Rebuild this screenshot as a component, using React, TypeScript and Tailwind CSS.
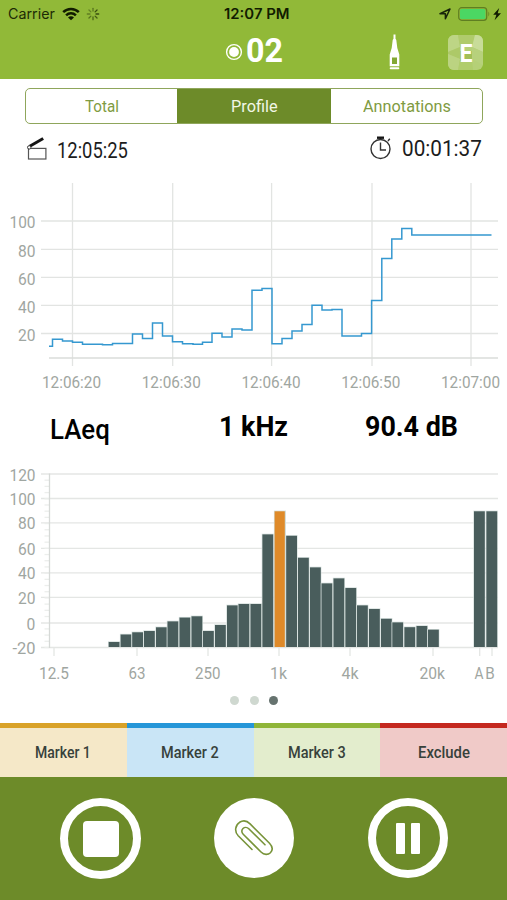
import { useLayoutEffect, useRef, useState } from 'react';

// Condenses a line of text so that it fills exactly the width of its box.
function Fit({ children, className }: { children: string; className: string }) {
  const box = useRef<HTMLSpanElement>(null);
  const inner = useRef<HTMLSpanElement>(null);
  const [scale, setScale] = useState(1);
  useLayoutEffect(() => {
    if (box.current && inner.current) setScale(box.current.offsetWidth / inner.current.offsetWidth);
  }, []);
  return (
    <span ref={box} className={`block shrink-0 whitespace-nowrap ${className}`}>
      <span ref={inner} className="inline-block origin-left" style={{ transform: `scaleX(${scale})` }}>
        {children}
      </span>
    </span>
  );
}

function StatusBar() {
  return (
    <div className="flex h-[28px] items-center font-['Inter',sans-serif] text-[14px] leading-[28px] text-[#1d2a05]">
      <Fit className="ml-[8px] w-[47px]">Carrier</Fit>
      <svg className="ml-[7px] shrink-0" width="18" height="14" viewBox="0 0 18 14" fill="none" stroke="#111c00" strokeWidth="2.5">
        <path d="M1.2 5.2a11 11 0 0 1 15.6 0" />
        <path d="M4.1 8.3a7 7 0 0 1 9.8 0" />
        <path d="M9 13.3 6 10.4a4.2 4.2 0 0 1 6 0z" fill="#111c00" stroke="none" />
      </svg>
      <svg className="ml-[6px] shrink-0" width="14" height="14" viewBox="-7 -7 14 14" strokeWidth="1.3" strokeLinecap="round">
        {[0, 45, 90, 135, 180, 225, 270, 315].map((a, i) => (
          <path key={a} d="M0-3V-5.7" stroke="#2f430b" strokeOpacity={[0.55, 0.9, 0.9, 0.8, 0.7, 0.6, 0.5, 0.45][i]} transform={`rotate(${a})`} />
        ))}
      </svg>
      <Fit className="ml-[124px] w-[66px] font-semibold text-[#111c00]">12:07 PM</Fit>
      <svg className="ml-[149px] shrink-0" width="12" height="12" viewBox="0 0 12 12" fill="none" stroke="#18240a" strokeWidth="1.5" strokeLinejoin="round">
        <path d="M11 1 6.4 10.7V5.8H1z" />
      </svg>
      <svg className="ml-[7px] shrink-0" width="44" height="14" viewBox="0 0 44 14">
        <rect x=".7" y=".7" width="28" height="12.6" rx="3" fill="none" stroke="#5f7e22" strokeWidth="1.2" />
        <rect x="2" y="2" width="25.4" height="10" rx="1.5" fill="#4bd763" />
        <path d="M30.3 4.5q2 2.5 0 5z" fill="#688726" />
        <path d="M41.2 1 35.2 7.7h3.2l-1.8 5.6 6.4-7h-3.3z" fill="#101b00" />
      </svg>
    </div>
  );
}

function Header() {
  return (
    <header className="h-[79px] bg-[#91b938]">
      <StatusBar />
      <div className="flex h-[48px] items-center text-white">
        <svg className="ml-[225px] shrink-0" width="18" height="18" viewBox="0 0 18 18">
          <circle cx="9" cy="9" r="7.4" fill="none" stroke="white" strokeWidth="1.4" />
          <circle cx="9" cy="9" r="4.9" fill="white" />
        </svg>
        <Fit className="mb-[5px] ml-[3px] w-[37px] text-[34px] leading-[44px] font-bold">02</Fit>
        <svg className="ml-[106px] shrink-0" width="11" height="36" viewBox="0 0 11 36">
          <path d="M4.5.5h2v4.2l.8 1.3 1 8 2 6.5v11.7H.7V20.5l2-6.5 1-8 .8-1.3z" fill="white" />
          <rect x="3" y="23.5" width="5" height="6.5" fill="#83a834" />
          <rect x=".7" y="33.3" width="9.6" height="2" rx="1" fill="white" />
        </svg>
        <svg className="ml-[48px] shrink-0" width="35" height="35" viewBox="0 0 35 35">
          <clipPath id="badge"><rect width="35" height="35" rx="6" /></clipPath>
          <g clipPath="url(#badge)">
            <rect width="35" height="35" fill="#b5d077" />
            <path d="M0 0h10l2 12L0 17z" fill="#bdd585" />
            <path d="m10 0 2 12h12l3-12z" fill="#b0cb6c" />
            <path d="M27 0h8v17l-11-5z" fill="#c8dc99" />
            <path d="m0 17 12-5v12L0 19z" fill="#adc968" />
            <path d="m35 17-11-5v12l11 6z" fill="#b7d17c" />
            <path d="m0 19 12 5-2 11H0z" fill="#bbd381" />
            <path d="m12 24-2 11h15l-1-11z" fill="#b0cd6c" />
            <path d="M12 16h12v10H12z" fill="#a2bf57" />
          </g>
          <text x="11.6" y="27.2" fontSize="26.5" fontWeight="700" textLength="13" lengthAdjust="spacingAndGlyphs" fill="white">E</text>
        </svg>
      </div>
    </header>
  );
}

const LEVEL_GRID: [string, number][] = [['100', 221], ['80', 249.3], ['60', 277.4], ['40', 305.4], ['20', 333.5]];
const TIME_GRID: [string, number][] = [['12:06:20', 72.5], ['12:06:30', 172.7], ['12:06:40', 271.6], ['12:06:50', 372], ['12:07:00', 471]];
const STEPS: [number, number][] = [
  [49, 346.3], [52.5, 339.3], [62.5, 341], [72.5, 342.3], [82.5, 344.2], [102.5, 344.8], [112.5, 343.5], [132.5, 334],
  [142.5, 338.5], [152.5, 323], [162.5, 336], [172.5, 341.7], [182.5, 343.7], [193, 344.2], [202.5, 342.3], [212, 333.3],
  [222, 337], [232, 329], [242, 330], [252, 290.3], [262, 288.5], [272, 343.8], [282, 338.4], [292, 331], [302, 324.6],
  [312, 305.2], [322, 310], [332, 309.5], [342, 336], [361.5, 333.5], [371.6, 300.6], [381.8, 258.5], [391.8, 239],
  [401.8, 228.6], [411.8, 235],
];

function ProfileChart() {
  const line = STEPS.map(([x, y], i) => (i === 0 ? `M${x} ${y}` : `H${x}V${y}`)).join('') + 'H491.5';
  return (
    <svg className="block" width="507" height="225" viewBox="0 175 507 225" fontSize="16.3" fill="#9fa6a1">
      <g stroke="#e2e4e2" strokeWidth="1.3">
        {LEVEL_GRID.map(([l, y]) => <path key={l} d={`M41 ${y}H498`} />)}
        {TIME_GRID.map(([l, x]) => <path key={l} d={`M${x} 183V366`} />)}
        <path d="M49 358H498" stroke="#dadcda" />
      </g>
      {LEVEL_GRID.map(([l, y]) => (
        <text key={l} x={l.length === 3 ? 9.5 : 18} y={y + 7.2} textLength={l.length === 3 ? 26 : 17.5} lengthAdjust="spacingAndGlyphs">{l}</text>
      ))}
      {TIME_GRID.map(([l], i) => (
        <text key={l} x={42 + i * 99.75} y="388.3" textLength="59" lengthAdjust="spacingAndGlyphs">{l}</text>
      ))}
      <path d={line} fill="none" stroke="#3598d0" strokeWidth="1.5" />
    </svg>
  );
}

const DB_GRID: [string, number, number, number][] = [
  ['120', 474, 9.5, 26], ['100', 498.5, 9.5, 26], ['80', 522.8, 18, 17.5], ['60', 548.3, 18, 17.5],
  ['40', 572.8, 18, 17.5], ['20', 597.4, 18, 17.5], ['0', 623, 26.5, 8.8], ['-20', 647.5, 12.5, 23],
];
const BANDS: [string, number, number, number][] = [
  ['12.5', 54, 39, 30], ['63', 137, 128.5, 17], ['250', 208, 195, 25.5], ['1k', 279, 270, 17],
  ['4k', 350, 341.5, 17], ['20k', 433, 419.5, 25.5], ['A', 479.7, 474.5, 9], ['B', 492, 485.3, 9.5],
];
const BARS: [number, number][] = [
  [108.7, 642], [120.6, 634.5], [132.2, 632.3], [144, 631], [156, 627.3], [167.5, 621.4], [179.5, 617.6], [191.5, 616.3],
  [203, 631], [215, 625], [227, 605.4], [238.5, 604], [250.5, 604], [262.4, 534.4], [274.6, 511.3], [286.2, 535.8],
  [298, 557.8], [310, 567.4], [321.5, 583.4], [333.5, 578.4], [345.4, 588], [357, 605.4], [369, 609], [381, 618.8],
  [392.3, 622.4], [404.4, 627.2], [416.5, 626], [428, 629.7], [474, 511.3], [486.4, 511.3],
];

function SpectrumChart() {
  return (
    <svg className="block" width="507" height="230" viewBox="0 460 507 230" fontSize="16.3" fill="#9fa6a1">
      <g stroke="#e4e6e4" strokeWidth="1.3">
        {DB_GRID.map(([l, y]) => <path key={l} d={`M41 ${y}H498`} />)}
        {Array.from({ length: 29 }, (_, i) => <path key={i} d={`M44.5 ${474 + i * 6.196}H49`} stroke="#eceeec" />)}
        {BANDS.map(([l, x]) => <path key={l} d={`M${x} 648V656`} />)}
        <path d="M49.5 473.5V648" stroke="#d6d9d7" />
      </g>
      {DB_GRID.map(([l, y, x, w]) => (
        <text key={l} x={x} y={y + 6.6} textLength={w} lengthAdjust="spacingAndGlyphs">{l}</text>
      ))}
      {BANDS.map(([l, , x, w]) => (
        <text key={l} x={x} y="679" textLength={w} lengthAdjust="spacingAndGlyphs">{l}</text>
      ))}
      {BARS.map(([x, y]) => (
        <g key={x}>
          <rect x={x - 0.7} y={y - 0.7} width="12.1" height={647.7 - y} fill="#d4dfdc" />
          <rect x={x} y={y} width={x === 274.6 ? 10.2 : 10.8} height={647 - y} fill={x === 274.6 ? '#df8a29' : '#495d5c'} />
        </g>
      ))}
    </svg>
  );
}

function Marker({ label, tone, text }: { label: string; tone: string; text: string }) {
  return (
    <div className={`flex flex-1 justify-center border-t-[5px] text-[16px] leading-[49px] font-medium text-[#37413b] ${tone}`}>
      <Fit className={text}>{label}</Fit>
    </div>
  );
}

export default function App() {
  return (
    <div className="flex h-[900px] w-[507px] flex-col overflow-hidden bg-white font-['Roboto',sans-serif]">
      <Header />
      <div className="mt-[9px] ml-[25px] flex h-[36px] w-[458px] shrink-0 overflow-hidden rounded-[5px] border-[1.5px] border-[#8fa65b] text-[17px] leading-[34px] text-[#7f9b42]">
        <div className="flex w-[151px] justify-center"><Fit className="w-[34px]">Total</Fit></div>
        <div className="flex w-[154px] justify-center bg-[#6d8b29] text-[#f2f7e6]"><Fit className="w-[47px]">Profile</Fit></div>
        <div className="flex flex-1 justify-center"><Fit className="w-[88px]">Annotations</Fit></div>
      </div>
      <div className="flex h-[51px] shrink-0 text-[22px] leading-[30px] text-[#1c1c1c]">
        <svg className="mt-[12px] ml-[26px] shrink-0" width="22" height="25" viewBox="0 0 22 25" fill="none">
          <rect x="2.5" y="12.4" width="17.4" height="10.6" stroke="#555" strokeWidth="1.2" />
          <path d="M3.7 10.2 17.2 2.5" stroke="#151515" strokeWidth="3" />
          <circle cx="3.2" cy="11.4" r="1.7" fill="white" stroke="#333" />
        </svg>
        <Fit className="mt-[12px] ml-[9px] w-[71px]">12:05:25</Fit>
        <svg className="mt-[12px] ml-[242px] shrink-0" width="22" height="24" viewBox="0 0 22 24" fill="none" stroke="#333" strokeWidth="1.4">
          <circle cx="10.5" cy="13" r="9.5" />
          <path d="M10.5 6.5V14H16" />
          <path d="M10.5 2v2M18 5l1.8-2.2" />
          <path d="M7 1.7h7" stroke="#151515" strokeWidth="2.4" />
        </svg>
        <Fit className="mt-[9.5px] ml-[10px] w-[80px]">00:01:37</Fit>
      </div>
      <div className="h-[225px] shrink-0"><ProfileChart /></div>
      <div className="flex h-[60px] shrink-0 text-[28px] leading-[36px] text-black">
        <Fit className="mt-[11.5px] ml-[50px] w-[60px] font-medium">LAeq</Fit>
        <Fit className="mt-[9px] ml-[109px] w-[69px] font-bold">1 kHz</Fit>
        <Fit className="mt-[9px] ml-[77px] w-[93px] font-bold">90.4 dB</Fit>
      </div>
      <div className="h-[230px] shrink-0"><SpectrumChart /></div>
      <div className="flex h-[33px] shrink-0 justify-center gap-[10.5px] pt-[6px] pl-[1px]">
        <span className="size-[9px] rounded-full bg-[#cfd8d0]" />
        <span className="size-[9px] rounded-full bg-[#cfd8d0]" />
        <span className="size-[9px] rounded-full bg-[#66736f]" />
      </div>
      <div className="flex h-[54px] shrink-0">
        <Marker label="Marker 1" text="w-[56px]" tone="border-[#d9a228] bg-[#f5e8c8]" />
        <Marker label="Marker 2" text="w-[58px]" tone="border-[#2596d8] bg-[#c9e5f6]" />
        <Marker label="Marker 3" text="w-[58px]" tone="border-[#8fb538] bg-[#e3edcd]" />
        <Marker label="Exclude" text="w-[52px]" tone="border-[#c4281f] bg-[#f0cac8]" />
      </div>
      <footer className="flex h-[123px] shrink-0 bg-[#6d8b29] pt-[21px] pl-[60px]">
        <div className="flex size-[81px] items-center justify-center rounded-full border-[8px] border-white">
          <div className="size-[36px] rounded-[4px] bg-white" />
        </div>
        <div className="ml-[73px] flex size-[80px] items-center justify-center rounded-full bg-white">
          <svg width="42" height="40" viewBox="0 0 42 40" fill="none" stroke="#78943a" strokeWidth="1.6" strokeLinecap="round">
            <path d="M19 31.5 5.2 17.7C1 13.3 2.4 7 6.6 4.3c3.6-2.2 7.7-1.2 10.5 1.6L36.5 25.2c3.6 3.8 3 7.3.9 9.5-2.2 2.2-6.2 2.5-9.4-.7L10.2 16.2c-2-2-1.6-4.3-.2-5.7 1.5-1.4 4-1.5 5.8.3L32 26.8" />
          </svg>
        </div>
        <div className="ml-[74px] flex size-[80px] items-center justify-center gap-[6px] rounded-full border-[8.5px] border-white">
          <div className="h-[31px] w-[9px] rounded-[1px] bg-white" />
          <div className="h-[31px] w-[9px] rounded-[1px] bg-white" />
        </div>
      </footer>
    </div>
  );
}
